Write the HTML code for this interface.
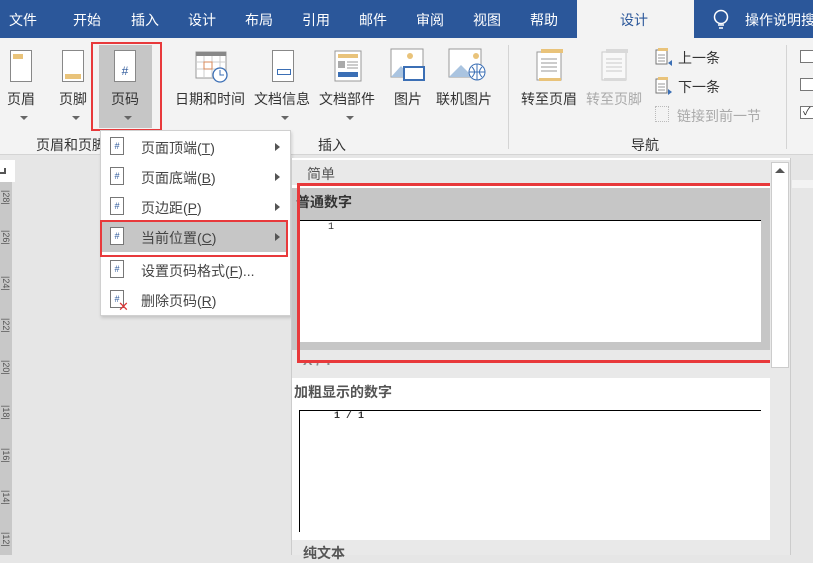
<!DOCTYPE html>
<html><head><meta charset="utf-8">
<style>
*{margin:0;padding:0;box-sizing:border-box}
body{width:813px;height:555px;overflow:hidden;background:#e6e6e6;font-family:"Liberation Sans","Noto Sans CJK SC",sans-serif;position:relative;color:#333}
.a{position:absolute}
.tab{position:absolute;top:10px;color:#fff;font-size:14px;white-space:nowrap}
.lbl{position:absolute;font-size:14px;color:#333;white-space:nowrap}
.doc{position:absolute;width:22px;height:32px;background:#fff;border:1px solid #888}
.mi{position:absolute;left:100px;width:190px;height:30px;font-size:14px;color:#444}
.mi span{position:absolute;left:41px;top:6px}
.mi i{position:absolute;left:175px;top:11px;width:0;height:0;border-left:5px solid #555;border-top:4px solid transparent;border-bottom:4px solid transparent}
.mi b{position:absolute;left:10px;top:5px;width:14px;height:18px;border:1px solid #777;background:#fff;font-size:9px;color:#2b579a;text-align:center;line-height:16px;font-weight:normal}
.arrow{position:absolute;width:0;height:0;border-top:4px solid #666;border-left:4px solid transparent;border-right:4px solid transparent}
.r{position:absolute;left:0;width:11px;font-size:9px;color:#555;line-height:11px;writing-mode:vertical-rl;white-space:nowrap}
</style></head><body>
<div class="a" style="left:0;top:0;width:813px;height:38px;background:#2b579a"></div>
<div class="tab" style="left:9px">文件</div>
<div class="tab" style="left:73px">开始</div>
<div class="tab" style="left:131px">插入</div>
<div class="tab" style="left:188px">设计</div>
<div class="tab" style="left:245px">布局</div>
<div class="tab" style="left:302px">引用</div>
<div class="tab" style="left:359px">邮件</div>
<div class="tab" style="left:416px">审阅</div>
<div class="tab" style="left:473px">视图</div>
<div class="tab" style="left:530px">帮助</div>
<div class="a" style="left:577px;top:0;width:117px;height:40px;background:#f3f3f3"></div>
<div class="tab" style="left:620px;color:#2b579a">设计</div>
<svg class="a" style="left:711px;top:8px" width="20" height="24"><circle cx="10" cy="9" r="6.5" fill="none" stroke="#fff" stroke-width="1.5"/><path d="M7 17h6M8 20h4" stroke="#fff" stroke-width="1.5"/></svg>
<div class="tab" style="left:745px">操作说明搜</div>
<!-- ribbon -->
<div class="a" style="left:0;top:38px;width:813px;height:117px;background:#f3f3f3;border-bottom:1px solid #d4d4d4"></div>
<div class="a" style="left:99px;top:45px;width:53px;height:83px;background:#c6c6c6"></div>
<div class="a" style="left:91px;top:42px;width:71px;height:89px;border:2px solid #e8393b"></div>
<div class="doc" style="left:10px;top:50px"><div class="a" style="left:2px;top:3px;width:10px;height:5px;background:#e9c37a"></div></div>
<div class="doc" style="left:62px;top:50px"><div class="a" style="left:2px;top:23px;width:16px;height:5px;background:#e9c37a"></div></div>
<div class="doc" style="left:114px;top:50px;color:#2b579a;font-size:12px;text-align:center;line-height:40px">#</div>
<div class="lbl" style="left:7px;top:89px">页眉</div>
<div class="lbl" style="left:59px;top:89px">页脚</div>
<div class="lbl" style="left:111px;top:89px">页码</div>
<div class="arrow" style="left:20px;top:116px"></div><div class="arrow" style="left:72px;top:116px"></div><div class="arrow" style="left:124px;top:116px"></div>
<svg class="a" style="left:194px;top:50px" width="40" height="36"><rect x="2" y="2" width="30" height="26" fill="#fff" stroke="#999"/><rect x="2" y="2" width="30" height="4" fill="#888"/><path d="M2 12h30M2 19h30M10 6v22M18 6v22M26 6v22" stroke="#ccc"/><rect x="10" y="12" width="8" height="7" fill="none" stroke="#d9895a"/><circle cx="26" cy="25" r="7" fill="#fff" stroke="#3b6fb5" stroke-width="1.3"/><path d="M26 20v5h4" stroke="#3b6fb5" fill="none"/></svg>
<div class="doc" style="left:272px;top:50px"><div class="a" style="left:4px;top:18px;width:14px;height:6px;border:1px solid #3b6fb5"></div></div>
<svg class="a" style="left:334px;top:50px" width="30" height="34"><rect x="1" y="1" width="26" height="30" fill="#fff" stroke="#999"/><rect x="4" y="4" width="20" height="4" fill="#e9c37a"/><rect x="4" y="11" width="7" height="7" fill="#aaa"/><path d="M13 12h11M13 15h11M13 18h11" stroke="#999"/><rect x="4" y="22" width="20" height="5" fill="#3b6fb5"/></svg>
<div class="lbl" style="left:175px;top:89px">日期和时间</div>
<div class="lbl" style="left:254px;top:89px">文档信息</div>
<div class="lbl" style="left:319px;top:89px">文档部件</div>
<div class="arrow" style="left:281px;top:116px"></div><div class="arrow" style="left:346px;top:116px"></div>
<svg class="a" style="left:390px;top:48px" width="40" height="36"><rect x="1" y="1" width="32" height="28" fill="#fff" stroke="#999"/><circle cx="20" cy="8" r="3" fill="#e9c37a"/><path d="M1 29l10-11 10 11z" fill="#aac4e0"/><rect x="14" y="19" width="20" height="13" fill="#fff" stroke="#3b6fb5" stroke-width="2"/></svg>
<svg class="a" style="left:448px;top:48px" width="40" height="36"><rect x="1" y="1" width="32" height="28" fill="#fff" stroke="#999"/><circle cx="28" cy="8" r="3" fill="#e9c37a"/><path d="M1 29l12-12 12 12z" fill="#aac4e0"/><circle cx="29" cy="24" r="8" fill="#fff" stroke="#3b6fb5"/><path d="M21 24h16M29 16v16M24 19q5 5 0 10M34 19q-5 5 0 10" stroke="#3b6fb5" fill="none"/></svg>
<div class="lbl" style="left:394px;top:89px">图片</div>
<div class="lbl" style="left:436px;top:89px">联机图片</div>
<div class="lbl" style="left:36px;top:135px">页眉和页脚</div>
<div class="lbl" style="left:318px;top:135px">插入</div>
<div class="a" style="left:508px;top:45px;width:1px;height:104px;background:#d4d4d4"></div>
<svg class="a" style="left:536px;top:48px" width="30" height="36"><rect x="1" y="4" width="24" height="28" fill="#fff" stroke="#999"/><rect x="5" y="1" width="22" height="4" fill="#e9c37a"/><path d="M5 11h16M5 15h16M5 19h16M5 23h16" stroke="#999"/><rect x="3" y="30" width="22" height="3" fill="#e9c37a"/></svg>
<svg class="a" style="left:601px;top:48px" width="30" height="36" opacity=".45"><rect x="1" y="4" width="24" height="28" fill="#fff" stroke="#999"/><rect x="5" y="1" width="22" height="4" fill="#bbb"/><path d="M5 11h16M5 15h16M5 19h16M5 23h16" stroke="#999"/><rect x="3" y="30" width="22" height="3" fill="#bbb"/></svg>
<div class="lbl" style="left:521px;top:89px">转至页眉</div>
<div class="lbl" style="left:586px;top:89px;color:#aaa">转至页脚</div>
<svg class="a" style="left:655px;top:47px" width="18" height="20"><rect x="1" y="3" width="11" height="14" fill="#fff" stroke="#777"/><rect x="3" y="1" width="10" height="3" fill="#e9c37a"/><path d="M3 8h7M3 11h7M3 14h7" stroke="#999"/><path d="M17 13l-4 3 4 3z" fill="#3b6fb5"/></svg>
<svg class="a" style="left:655px;top:76px" width="18" height="20"><rect x="1" y="3" width="11" height="14" fill="#fff" stroke="#777"/><rect x="3" y="1" width="10" height="3" fill="#e9c37a"/><path d="M3 8h7M3 11h7M3 14h7" stroke="#999"/><path d="M13 13l4 3-4 3z" fill="#3b6fb5"/></svg>
<div class="lbl" style="left:678px;top:48px">上一条</div>
<div class="lbl" style="left:678px;top:77px">下一条</div>
<div class="a" style="left:655px;top:106px;width:14px;height:16px;border:1px dotted #bbb"></div>
<div class="lbl" style="left:677px;top:106px;color:#aaa">链接到前一节</div>
<div class="lbl" style="left:631px;top:135px">导航</div>
<div class="a" style="left:786px;top:45px;width:1px;height:104px;background:#d4d4d4"></div>
<div class="a" style="left:800px;top:50px;width:14px;height:13px;border:1px solid #777;background:#fff"></div>
<div class="a" style="left:800px;top:78px;width:14px;height:13px;border:1px solid #777;background:#fff"></div>
<div class="a" style="left:800px;top:106px;width:14px;height:13px;border:1px solid #777;background:#fff;font-size:11px;line-height:11px;padding-left:2px">✓</div>
<!-- ruler -->
<div class="a" style="left:0;top:160px;width:15px;height:22px;background:#fff"></div>
<div class="a" style="left:0;top:168px;width:6px;height:6px;border-right:2px solid #555;border-bottom:2px solid #555"></div>
<div class="a" style="left:0;top:182px;width:12px;height:373px;background:#c8c8c8"></div>
<div class="r" style="top:190px">|28|</div>
<div class="r" style="top:230px">|26|</div>
<div class="r" style="top:276px">|24|</div>
<div class="r" style="top:318px">|22|</div>
<div class="r" style="top:360px">|20|</div>
<div class="r" style="top:405px">|18|</div>
<div class="r" style="top:448px">|16|</div>
<div class="r" style="top:490px">|14|</div>
<div class="r" style="top:532px">|12|</div>
<!-- menu -->
<div class="a" style="left:100px;top:130px;width:191px;height:186px;background:#fff;border:1px solid #d0d0d0;box-shadow:1px 2px 3px rgba(0,0,0,.15)"></div>
<div class="mi" style="top:132px"><b>#</b><span>页面顶端(<u>T</u>)</span><i></i></div>
<div class="mi" style="top:162px"><b>#</b><span>页面底端(<u>B</u>)</span><i></i></div>
<div class="mi" style="top:192px"><b>#</b><span>页边距(<u>P</u>)</span><i></i></div>
<div class="mi" style="top:222px;background:#c6c6c6;width:186px"><b>#</b><span>当前位置(<u>C</u>)</span><i></i></div>
<div class="a" style="left:100px;top:220px;width:188px;height:37px;border:2px solid #e8393b"></div>
<div class="mi" style="top:255px"><b>#</b><span>设置页码格式(<u>F</u>)...</span></div>
<div class="mi" style="top:285px"><b>#</b><span>删除页码(<u>R</u>)</span><div class="a" style="left:18px;top:14px;color:#d33;font-size:13px">✕</div></div>
<!-- gallery -->
<div class="a" style="left:291px;top:158px;width:500px;height:397px;background:#fff;border-left:1px solid #ccc;border-right:1px solid #ccc"></div>
<div class="a" style="left:292px;top:160px;width:478px;height:25px;background:#e9e9e9"></div>
<div class="lbl" style="left:307px;top:164px;color:#555">简单</div>
<div class="a" style="left:292px;top:188px;width:478px;height:162px;background:#c6c6c6"></div>
<div class="lbl" style="left:296px;top:192px;font-weight:bold;color:#333">普通数字</div>
<div class="a" style="left:299px;top:220px;width:462px;height:122px;background:#fff;border-top:1px solid #000"></div>
<div class="a" style="left:328px;top:222px;font-size:10px;font-family:'Liberation Mono',monospace">1</div>
<div class="a" style="left:292px;top:350px;width:478px;height:28px;background:#e9e9e9"></div>
<div class="lbl" style="left:303px;top:352px;color:#888;font-weight:bold;clip-path:inset(9px 0 0 0)">X / Y</div>
<div class="a" style="left:297px;top:183px;width:476px;height:180px;border:3px solid #e8393b"></div>
<div class="lbl" style="left:294px;top:382px;font-weight:bold;color:#555">加粗显示的数字</div>
<div class="a" style="left:299px;top:410px;width:462px;height:122px;background:#fff;border-top:1px solid #000;border-left:1px solid #000"></div>
<div class="a" style="left:334px;top:411px;font-size:10px;font-weight:bold;font-family:'Liberation Mono',monospace;white-space:pre">1 / 1</div>
<div class="a" style="left:292px;top:540px;width:478px;height:15px;background:#e9e9e9"></div>
<div class="lbl" style="left:303px;top:543px;color:#555;font-weight:bold">纯文本</div>
<div class="a" style="left:770px;top:160px;width:20px;height:395px;background:#e9e9e9"></div>
<div class="a" style="left:771px;top:162px;width:18px;height:206px;background:#fff;border:1px solid #ccc"></div>
<div class="a" style="left:775px;top:168px;width:0;height:0;border-bottom:5px solid #555;border-left:5px solid transparent;border-right:5px solid transparent"></div>
<div class="a" style="left:792px;top:158px;width:21px;height:397px;background:#e6e6e6"></div>
<div class="a" style="left:792px;top:180px;width:21px;height:8px;background:#f3f3f3"></div>
</body></html>
